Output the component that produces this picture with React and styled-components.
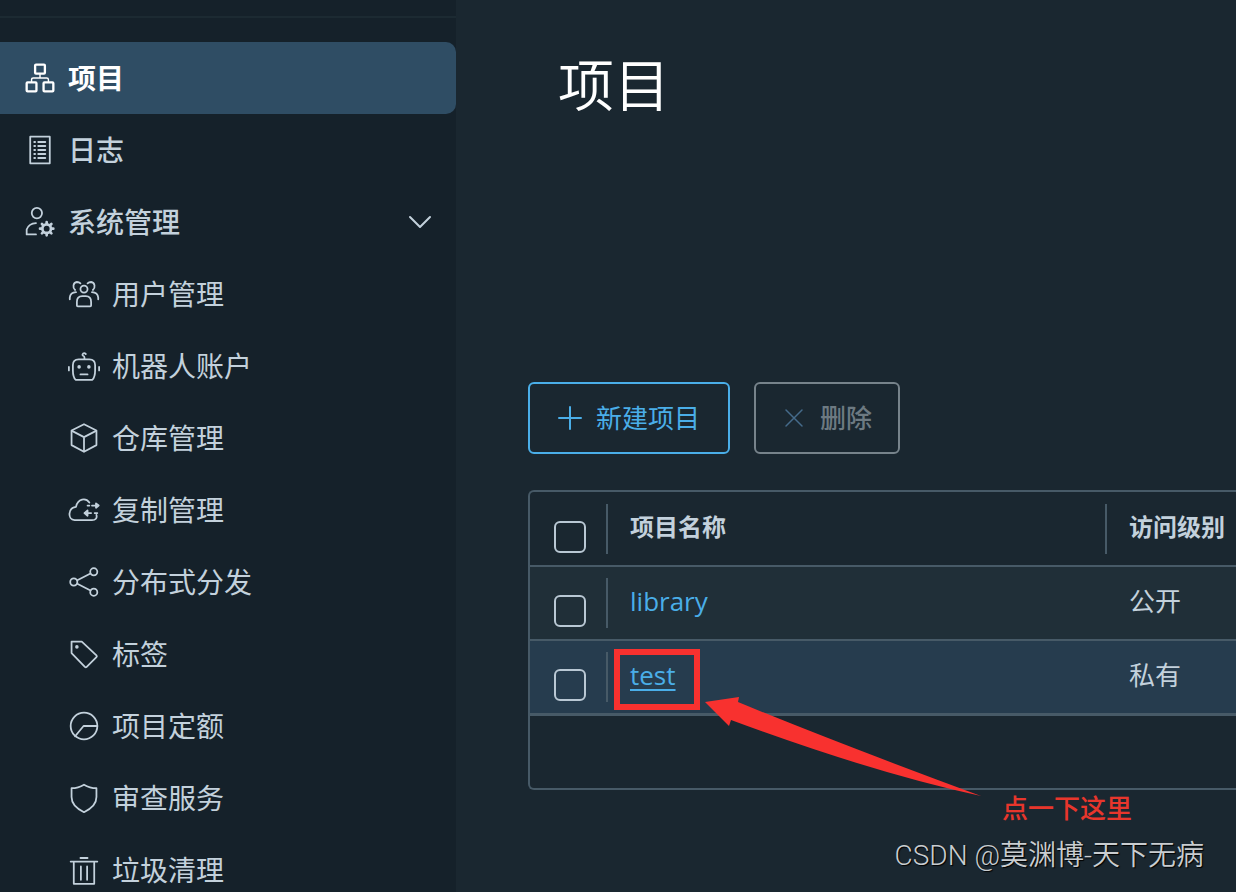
import React from 'react';
import styled, { createGlobalStyle, css } from 'styled-components';

const GlobalStyle = createGlobalStyle`
  * {
    box-sizing: border-box;
  }

  body {
    margin: 0;
    background-color: #1a2730;
    color: #c3d1dc;
    font-family: 'Open Sans', 'Noto Sans CJK SC', sans-serif;
  }
`;

const Layout = styled.div`
  position: relative;
  display: flex;
  height: 100vh;
  overflow: hidden;
`;

const Sidebar = styled.nav`
  flex: 0 0 456px;
  background-color: #15212a;
  overflow: hidden;
`;

const SidebarTop = styled.div`
  height: 18px;
  margin-bottom: 24px;
  border-bottom: 2px solid #1c2a32;
`;

const NavList = styled.ul`
  list-style: none;
  margin: 0;
  padding: 0;
`;

const NavLink = styled.a`
  display: flex;
  align-items: center;
  gap: 12px;
  height: 72px;
  padding: 0 24px;
  color: #c3d1dc;
  font-size: 28px;
  font-weight: 500;
  text-decoration: none;

  ${props => props.$nested && css`
    padding-left: 68px;
    font-weight: 400;
  `}

  ${props => props.$active && css`
    background-color: #2f4d64;
    border-radius: 0 10px 10px 0;
    color: #fff;
    font-weight: 700;
  `}
`;

const NavLabel = styled.span`
  flex: 1;
  line-height: 40px;
`;

const Icon = styled.svg`
  flex: none;
  width: ${props => props.$size || 32}px;
  height: ${props => props.$size || 32}px;
  fill: none;
  stroke: currentColor;
  stroke-width: 2;
  stroke-linecap: round;
  stroke-linejoin: round;
`;

const Main = styled.main`
  flex: 1;
  min-width: 0;
  padding: 42px 0 0 72px;
`;

const Title = styled.h1`
  margin: 0 0 256px;
  padding-left: 30px;
  color: #fff;
  font-size: 56px;
  font-weight: 350;
  line-height: 84px;
`;

const Toolbar = styled.div`
  display: flex;
  gap: 24px;
  margin-bottom: 36px;
`;

const Button = styled.button`
  display: flex;
  align-items: center;
  gap: 14px;
  height: 72px;
  padding: 0 28px;
  border: 2px solid #4aaee8;
  border-radius: 6px;
  background: transparent;
  color: #4aaee8;
  font-family: inherit;
  font-size: 26px;
  line-height: 40px;

  &:disabled {
    padding: 0 26px;
    border-color: #77838b;
    color: #6d7a82;
    font-weight: 500;
  }

  &:disabled svg {
    color: #456b8b;
  }
`;

const Grid = styled.div`
  padding-bottom: 72px;
  border: 2px solid #475a67;
  border-right: 0;
  border-radius: 6px 0 0 6px;
`;

const Table = styled.table`
  width: 100%;
  border-collapse: collapse;
  table-layout: fixed;
`;

const Row = styled.tr`
  height: 74px;
  background-color: ${props => props.$background || 'transparent'};
  border-bottom: 2px solid #475a67;

  tbody &:last-child {
    border-bottom-width: 3px;
  }
`;

const cell = css`
  padding: 0;
  text-align: left;
  vertical-align: middle;
`;

const HeadCell = styled.th`
  ${cell}
  width: ${props => props.$width || 'auto'};
  font-size: 24px;
  font-weight: 700;
`;

const Cell = styled.td`
  ${cell}
  font-size: 26px;
`;

const CellInner = styled.div`
  display: flex;
  align-items: center;
  height: 50px;
  padding: 0 0 4px 22px;
  border-left: 2px solid ${props => (props.$divided ? '#475a67' : 'transparent')};
  line-height: 40px;
`;

const Checkbox = styled.input.attrs({ type: 'checkbox' })`
  appearance: none;
  display: block;
  width: 32px;
  height: 32px;
  margin: 16px 0 0 24px;
  border: 2px solid #b9c8d4;
  border-radius: 6px;
`;

const ProjectLink = styled.a`
  position: relative;
  color: #4aaee8;
  text-decoration: ${props => (props.$hovered ? 'underline' : 'none')};
  text-decoration-thickness: 2px;
  text-underline-offset: 4px;
`;

const Highlight = styled.span`
  position: absolute;
  top: -6px;
  left: -16px;
  width: 86px;
  height: 61px;
  border: 6px solid #f8312f;
`;

const Arrow = styled.svg`
  position: absolute;
  top: 40px;
  left: 74px;
  width: 280px;
  height: 104px;
  fill: #f8312f;
`;

const Note = styled.p`
  position: absolute;
  right: 104px;
  bottom: 64px;
  margin: 0;
  color: #e8362c;
  font-size: 26px;
  font-weight: 500;
  line-height: 40px;
`;

const Watermark = styled.p`
  position: absolute;
  right: 32px;
  bottom: 16px;
  margin: 0;
  color: #c9cdd0;
  font-family: Roboto, 'Noto Sans CJK SC', sans-serif;
  font-size: 28px;
  font-weight: 350;
  line-height: 40px;
  text-shadow: 1px 1px 1px #000;
`;

const icons = {
  projects: (
    <g strokeWidth="2.6">
      <rect x="12.5" y="3" width="11" height="10" rx="1" />
      <rect x="3" y="23" width="11" height="10" rx="1" />
      <rect x="22" y="23" width="11" height="10" rx="1" />
      <path d="M18 13v5M8.5 22v-2q0-2 2-2h15q2 0 2 2v2" strokeWidth="1.6" />
    </g>
  ),
  logs: (
    <>
      <path d="M7 3h22v30H7z" />
      <path d="M11.5 9h1M11.5 13.5h1M11.5 18h1M11.5 22.5h1M11.5 27h1" />
      <path d="M16 9h8M16 13.5h8M16 18h8M16 22.5h8M16 27h8" />
    </>
  ),
  administration: (
    <>
      <circle cx="14.5" cy="8" r="5.8" />
      <path d="M13.5 32H3v-5.5c1.5-4.2 5.5-7 10.5-7.2" />
      <circle cx="25.5" cy="25.5" r="4.8" strokeWidth="3" />
      <path
        d="M25.5 18v2M25.5 31v2M18 25.5h2M31 25.5h2M20.2 20.2l1.4 1.4M29.4 29.4l1.4 1.4M20.2 30.8l1.4-1.4M29.4 21.6l1.4-1.4"
        strokeWidth="3"
      />
    </>
  ),
  users: (
    <>
      <circle cx="18" cy="12.5" r="4" />
      <path d="M10 31v-4q0-6.500 6-6.500h4q6 0 6 6.500v4q0 1-1 1H11q-1 0-1-1z" />
      <path d="M8 13.500C5 11 5.500 5 10 4.500q2.500 0 4 1.500M28 13.500C31 11 30.500 5 26 4.500q-2.500 0-4 1.500" />
      <path d="M2 24v-2q.5-5.500 7-6M34 24v-2q-.5-5.500-7-6" />
    </>
  ),
  robot: (
    <>
      <path d="M12 10.5h12q6.500 0 6.500 6.500v6q0 7-3 10.500H8.500Q5.500 30 5.500 23v-6q0-6.500 6.500-6.500z" />
      <path d="M18.500 10V8.500q0-1.500-1.500-2-1.500-1 0-2.500 1.500-1 3 .5" />
      <path d="M1 19v4M35 19v4M14 27.500h8" />
      <circle cx="12.5" cy="19" r="1" />
      <circle cx="23.5" cy="19" r="1" />
    </>
  ),
  registries: (
    <>
      <path d="M18 2.500 32 9.500v16.500L18 33.500 4 26V9.500z" />
      <path d="M4.500 10 18 17l13.500-7M18 17v16" />
    </>
  ),
  replications: (
    <>
      <path d="M24 9.500C20 4 11 5 9 14.500 0 15.500-1 28.500 7.500 29.500H27c4 0 6-2.500 5-6" />
      <path d="M22 13h2M27 13h5M19 21.500h7M30 21.500h3" />
      <path d="m31.500 10.500 3 2.500-3 2.500zM22 18.500l-3.500 3 3.500 3z" />
    </>
  ),
  distributions: (
    <>
      <circle cx="6.5" cy="18" r="4" />
      <circle cx="29" cy="6.500" r="4" />
      <circle cx="29" cy="29.500" r="4" />
      <path d="m10.500 16 14.800-7.500M10.500 20l14.800 7.500" />
    </>
  ),
  labels: (
    <>
      <path d="M4 4h11.500L32 19.500q1 1 0 2L21 32.500q-1 1-2 0L4 17z" />
      <circle cx="10" cy="10" r="1" />
    </>
  ),
  quotas: (
    <>
      <circle cx="18" cy="18" r="15" />
      <path d="M8 29.500 17.500 18H33" />
    </>
  ),
  interrogation: (
    <path d="M18 3q6.500 4 14 4v10c0 8.500-6.500 13.500-14 17C10.500 30.500 4 25.500 4 17V7q7.500 0 14-4z" />
  ),
  garbage: (
    <path d="M3 8.500h30M14 4.500h8M6.500 10v23.500h23V10M14.500 14v15M21.500 14v15" />
  ),
};

const navItems = [
  { label: '项目', icon: 'projects', active: true },
  { label: '日志', icon: 'logs' },
  { label: '系统管理', icon: 'administration', expandable: true },
  { label: '用户管理', icon: 'users', nested: true },
  { label: '机器人账户', icon: 'robot', nested: true },
  { label: '仓库管理', icon: 'registries', nested: true },
  { label: '复制管理', icon: 'replications', nested: true },
  { label: '分布式分发', icon: 'distributions', nested: true },
  { label: '标签', icon: 'labels', nested: true },
  { label: '项目定额', icon: 'quotas', nested: true },
  { label: '审查服务', icon: 'interrogation', nested: true },
  { label: '垃圾清理', icon: 'garbage', nested: true },
];

const projects = [
  { name: 'library', access: '公开', background: '#202f38' },
  { name: 'test', access: '私有', background: '#263c4e', hovered: true },
];

const NavItem = ({ item }) => (
  <li>
    <NavLink href="#" $active={item.active} $nested={item.nested}>
      <Icon viewBox="0 0 36 36" aria-hidden="true">{icons[item.icon]}</Icon>
      <NavLabel>{item.label}</NavLabel>
      {item.expandable && (
        <Icon viewBox="0 0 24 24" $size={24} aria-hidden="true">
          <path d="m2 7 10 10L22 7" />
        </Icon>
      )}
    </NavLink>
  </li>
);

const ProjectRow = ({ project }) => (
  <Row $background={project.background}>
    <Cell>
      <Checkbox aria-label={project.name} />
    </Cell>
    <Cell>
      <CellInner $divided>
        <ProjectLink href="#" $hovered={project.hovered}>
          {project.name}
          {project.hovered && (
            <>
              <Highlight />
              <Arrow viewBox="0 0 280 104" aria-hidden="true">
                <path d="M1 7 35 2 34 7Q128 46 277 101 170 78 27 25L25 31z" />
              </Arrow>
            </>
          )}
        </ProjectLink>
      </CellInner>
    </Cell>
    <Cell>
      <CellInner>{project.access}</CellInner>
    </Cell>
  </Row>
);

const App = () => (
  <>
    <GlobalStyle />
    <Layout>
      <Sidebar>
        <SidebarTop />
        <NavList>
          {navItems.map(item => (
            <NavItem key={item.icon} item={item} />
          ))}
        </NavList>
      </Sidebar>
      <Main>
        <Title>项目</Title>
        <Toolbar>
          <Button type="button">
            <Icon viewBox="0 0 24 24" $size={24} aria-hidden="true">
              <path d="M12 1v22M1 12h22" />
            </Icon>
            新建项目
          </Button>
          <Button type="button" disabled>
            <Icon viewBox="0 0 24 24" $size={24} aria-hidden="true">
              <path d="m4 4 16 16M20 4 4 20" strokeWidth="1.5" />
            </Icon>
            删除
          </Button>
        </Toolbar>
        <Grid>
          <Table>
            <thead>
              <Row>
                <HeadCell $width="76px">
                  <Checkbox aria-label="项目名称" />
                </HeadCell>
                <HeadCell $width="499px">
                  <CellInner $divided>项目名称</CellInner>
                </HeadCell>
                <HeadCell>
                  <CellInner $divided>访问级别</CellInner>
                </HeadCell>
              </Row>
            </thead>
            <tbody>
              {projects.map(project => (
                <ProjectRow key={project.name} project={project} />
              ))}
            </tbody>
          </Table>
        </Grid>
      </Main>
      <Note>点一下这里</Note>
      <Watermark>CSDN @莫渊博-天下无病</Watermark>
    </Layout>
  </>
);

export default App;
